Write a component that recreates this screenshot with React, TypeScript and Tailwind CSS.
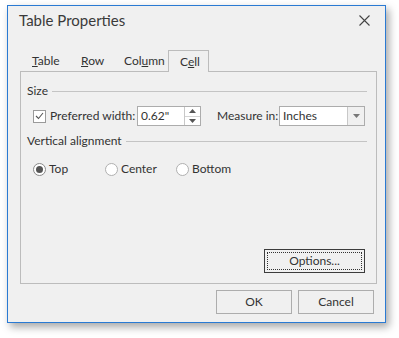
const font = { fontFamily: 'Lato, "Liberation Sans", sans-serif' };

export default function App() {
    return (
        <div className="w-[399px] h-[338px] bg-white pt-[5px] pl-[7px] text-[12px] text-[#333]" style={font}>
            <div className="w-[379px] h-[318px] border border-[#2a7ad3] bg-[#f0f0f0] flex flex-col shadow-[3px_4px_8px_rgba(0,0,0,0.35)]">
                {/* Title */}
                <div className="h-[28px] flex items-center justify-between pl-[11px] pr-[15px]">
                    <span className="text-[15px] text-[#3a3a3a]">Table Properties</span>
                    <svg width="11" height="11" viewBox="0 0 11 11">
                        <path d="M0.5 0.5 L10.5 10.5 M10.5 0.5 L0.5 10.5" stroke="#444" strokeWidth="1.1" />
                    </svg>
                </div>

                {/* Tabs */}
                <div className="mt-[16px] ml-[12px] h-[21px] flex items-end relative z-10">
                    <Tab label="Table" u={0} w="w-[49px]" />
                    <Tab label="Row" u={0} w="w-[43px]" />
                    <Tab label="Column" u={3} w="w-[56px]" />
                    <div className="w-[41px] h-[22px] -mb-px border border-b-0 border-[#bcbcbc] bg-[#f0f0f0] pl-[11px] flex items-center">
                        <span>C<u>e</u>ll</span>
                    </div>
                </div>

                {/* Panel */}
                <div className="ml-[12px] w-[357px] h-[213px] border border-[#bcbcbc] flex flex-col px-[6px] pt-[12px]">
                    <GroupHeader label="Size" />
                    <div className="mt-[8px] h-[20px] flex items-center">
                        <div className="ml-[6px] w-[13px] h-[13px] border border-[#9a9a9a] bg-white flex items-center justify-center">
                            <svg width="9" height="8" viewBox="0 0 9 8">
                                <path d="M1 4 L3.5 6.5 L8 1" fill="none" stroke="#555" strokeWidth="1.1" />
                            </svg>
                        </div>
                        <span className="ml-[4px] w-[87px]">Preferred width:</span>
                        <div className="w-[64px] h-[20px] border border-[#acacac] bg-white flex">
                            <div className="flex-1 pl-[3px] flex items-center">0.62"</div>
                            <div className="w-[16px] border-l border-[#c8c8c8] flex flex-col">
                                <div className="flex-1 flex items-center justify-center border-b border-[#d4d4d4]">
                                    <svg width="7" height="4" viewBox="0 0 7 4"><path d="M0 4 L3.5 0 L7 4 Z" fill="#555" /></svg>
                                </div>
                                <div className="flex-1 flex items-center justify-center">
                                    <svg width="7" height="4" viewBox="0 0 7 4"><path d="M0 0 L3.5 4 L7 0 Z" fill="#555" /></svg>
                                </div>
                            </div>
                        </div>
                        <span className="ml-[16px] w-[62px]">Measure in:</span>
                        <div className="w-[86px] h-[20px] border border-[#acacac] bg-white flex">
                            <div className="flex-1 pl-[3px] flex items-center">Inches</div>
                            <div className="w-[17px] border-l border-[#c8c8c8] bg-[#f0f0f0] flex items-center justify-center">
                                <svg width="7" height="4" viewBox="0 0 7 4"><path d="M0 0 L3.5 4 L7 0 Z" fill="#777" /></svg>
                            </div>
                        </div>
                    </div>

                    <div className="mt-[8px]">
                        <GroupHeader label="Vertical alignment" />
                    </div>

                    <div className="mt-[14px] h-[14px] flex items-center">
                        <Radio label="Top" checked w="w-[78px] pl-[6px]" />
                        <Radio label="Center" w="w-[71px]" />
                        <Radio label="Bottom" w="w-[80px]" />
                    </div>

                    <div className="flex-1" />
                    <div className="flex justify-end pr-[5px] mb-[10px]">
                        <div className="w-[101px] h-[24px] border border-[#3c3c3c] p-[2px]">
                            <div className="w-full h-full border border-dotted border-[#333] flex items-center justify-center">
                                Options...
                            </div>
                        </div>
                    </div>
                </div>

                {/* Footer */}
                <div className="mt-[6px] flex justify-end gap-[6px] pr-[11px]">
                    <Button label="OK" />
                    <Button label="Cancel" />
                </div>
            </div>
        </div>
    );
}

function Tab({ label, u, w }: { label: string; u: number; w: string }) {
    return (
        <div className={`${w} h-[21px] pl-[12px] flex items-center`}>
            <span>
                {label.slice(0, u)}
                <u>{label[u]}</u>
                {label.slice(u + 1)}
            </span>
        </div>
    );
}

function GroupHeader({ label }: { label: string }) {
    return (
        <div className="h-[14px] flex items-center gap-[4px]">
            <span>{label}</span>
            <div className="flex-1 h-px bg-[#c4c4c4] mr-[3px]" />
        </div>
    );
}

function Radio({ label, checked, w }: { label: string; checked?: boolean; w: string }) {
    return (
        <div className={`${w} flex items-center`}>
            <div className={`w-[13px] h-[13px] rounded-full border bg-white flex items-center justify-center ${checked ? 'border-[#8a8a8a]' : 'border-[#b0b0b0]'}`}>
                {checked && <div className="w-[7px] h-[7px] rounded-full bg-[#555]" />}
            </div>
            <span className="ml-[3px]">{label}</span>
        </div>
    );
}

function Button({ label }: { label: string }) {
    return (
        <div className="w-[76px] h-[24px] border border-[#adadad] flex items-center justify-center">
            {label}
        </div>
    );
}
